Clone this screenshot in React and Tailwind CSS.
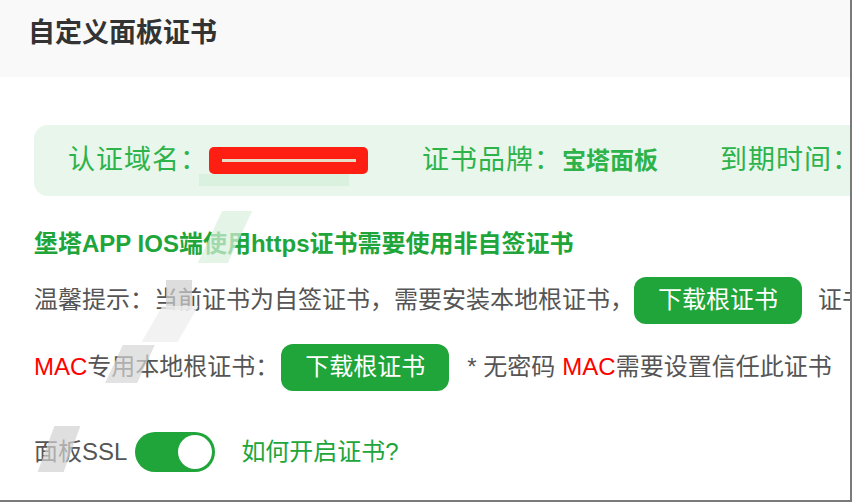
import React from 'react';

const font = { fontFamily: '"Liberation Sans", "Noto Sans CJK SC", sans-serif' };

// mosaic patch that sits over censored text
const Patch = ({ className }) => (
  <span className={`absolute pointer-events-none ${className}`} />
);

export default function App() {
  return (
    <div
      className="relative w-[852px] h-[502px] overflow-hidden bg-white border-r-2 border-b-2 border-[#7a7a7a]"
      style={font}
    >
      {/* ── Encabezado ── */}
      <div className="h-[77px] bg-[#f9f9f9] pl-[28px] pt-[15px]">
        <h1 className="text-[27px] leading-[36px] font-bold text-[#333]">自定义面板证书</h1>
      </div>

      {/* ── Caja verde ── */}
      <div className="mt-[48px] ml-[34px] h-[71px] rounded-l-[14px] bg-[#e8f6ec] flex items-center pl-[34px] whitespace-nowrap">
        <span className="shrink-0 text-[27px] tracking-[1px] text-[#2db34a]">认证域名：</span>
        <span className="relative shrink-0 ml-[1px] w-[159px] h-[27px] rounded-[5px] bg-[#ff1f12] flex items-center justify-center">
          <span className="w-[134px] h-[3px] bg-[#e6dcc8]" />
          <Patch className="left-[-10px] top-[27px] w-[150px] h-[12px] bg-[#d6f0dc] opacity-70" />
        </span>
        <span className="shrink-0 ml-[54px] text-[27px] tracking-[1px] text-[#2db34a]">证书品牌：</span>
        <span className="shrink-0 text-[24px] font-bold text-[#2db34a]">宝塔面板</span>
        <span className="shrink-0 ml-[62px] text-[27px] tracking-[1px] text-[#2db34a]">到期时间：</span>
      </div>

      {/* ── Textos ── */}
      <div className="pl-[34px] whitespace-nowrap">
        <div className="relative mt-[31px] h-[34px] flex items-center text-[24px] font-bold text-[#20a53a]">
          堡塔APP IOS端使用https证书需要使用非自签证书
          <Patch className="left-[176px] top-[-16px] w-[30px] h-[52px] bg-[#d9f0dd] opacity-70 skew-x-[-25deg]" />
        </div>

        <div className="relative mt-[15px] h-[48px] flex items-center text-[24px] text-[#555]">
          <span className="shrink-0">温馨提示：当前证书为自签证书，需要安装本地根证书，</span>
          <button className="shrink-0 w-[168px] h-[47px] rounded-[12px] bg-[#20a53a] text-white text-[24px]">
            下载根证书
          </button>
          <span className="shrink-0 ml-[16px]">证书</span>
          <Patch className="left-[132px] top-[4px] w-[26px] h-[30px] bg-[#cfcfcf] opacity-70" />
          <Patch className="left-[118px] top-[30px] w-[36px] h-[36px] bg-[#efefef] opacity-80 skew-x-[-30deg]" />
        </div>

        <div className="relative mt-[19px] h-[48px] flex items-center text-[24px] text-[#555]">
          <span className="text-[#ff0000]">MAC</span>
          <span className="shrink-0">专用本地根证书：</span>
          <button className="shrink-0 ml-[2px] w-[168px] h-[47px] rounded-[12px] bg-[#20a53a] text-white text-[24px]">
            下载根证书
          </button>
          <span className="shrink-0 ml-[18px] mr-[7px]">* 无密码</span>
          <span className="text-[#ff0000]">MAC</span>
          <span className="shrink-0">需要设置信任此证书</span>
          <Patch className="left-[80px] top-[2px] w-[32px] h-[38px] bg-[#d6d6d6] opacity-70 skew-x-[-25deg]" />
        </div>

        <div className="relative mt-[39px] h-[44px] flex items-center text-[24px] text-[#555]">
          <span>面板SSL</span>
          <span className="shrink-0 ml-[8px] w-[80px] h-[40px] rounded-full bg-[#20a53a] flex items-center justify-end pr-[3px]">
            <span className="w-[34px] h-[34px] rounded-full bg-white" />
          </span>
          <span className="ml-[26px] text-[#20a53a]">如何开启证书?</span>
          <Patch className="left-[12px] top-[-4px] w-[26px] h-[46px] bg-[#d2d2d2] opacity-70 skew-x-[-20deg]" />
        </div>
      </div>
    </div>
  );
}
